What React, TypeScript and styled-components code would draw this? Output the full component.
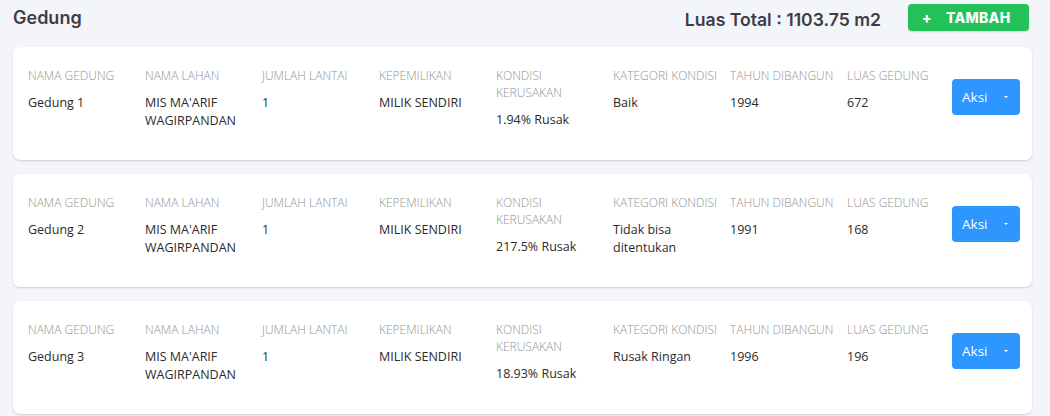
import React from "react";
import styled, { createGlobalStyle } from "styled-components";

const Global = createGlobalStyle`
  html, body { margin: 0; padding: 0; background: #f4f5fa; }
  body { font-family: "Open Sans", "Noto Sans", sans-serif; }
  * { box-sizing: border-box; }
`;

const Page = styled.div`
  width: 1050px;
  height: 416px;
  overflow: hidden;
  padding: 3px 18px 0 13px;
  background: #f4f5fa;
`;

const Header = styled.div`
  display: flex;
  align-items: center;
  height: 28px;
  margin-bottom: 16px;
  padding-right: 3px;
`;

const Title = styled.h1`
  margin: 0;
  flex: 1;
  font-family: "Inter", "Noto Sans", sans-serif;
  font-weight: 600;
  font-size: 18px;
  color: #3d3e45;
`;

const Total = styled.div`
  font-family: "Inter", "Noto Sans", sans-serif;
  font-weight: 600;
  font-size: 17.6px;
  color: #3d3e45;
  margin-right: 27px;
  margin-top: 4px;
`;

const AddButton = styled.button`
  display: flex;
  align-items: center;
  gap: 14px;
  height: 27px;
  width: 121px;
  padding: 0 0 0 14px;
  border: none;
  border-radius: 4px;
  background: #22c15a;
  color: #fff;
  font-family: "Inter", "Noto Sans", sans-serif;
  font-weight: 800;
  font-size: 14px;
  letter-spacing: 0.3px;
  box-shadow: 0 1px 2px rgba(0, 0, 0, 0.12);
`;

const List = styled.div`
  display: flex;
  flex-direction: column;
  gap: 14px;
`;

const Card = styled.div`
  display: flex;
  align-items: center;
  height: 113px;
  padding: 0 12px 10px 15px;
  background: #fff;
  border-radius: 7px;
  box-shadow: 0 1px 2px rgba(0, 0, 0, 0.16);
`;

const Field = styled.div<{ $w: number }>`
  width: ${(p) => p.$w}px;
  flex: none;
  padding-right: 8px;
  align-self: flex-start;
  padding-top: 20px;
`;

const Label = styled.div`
  font-size: 12px;
  font-weight: 300;
  line-height: 17px;
  color: #949494;
  text-transform: uppercase;
  margin-bottom: 10px;
  white-space: normal;
`;

const Value = styled.div`
  font-size: 12.5px;
  line-height: 18px;
  color: #2b2b2b;
  margin-top: 1px;
`;

const Spacer = styled.div`
  flex: 1;
`;

const ActionButton = styled.button`
  flex: none;
  display: flex;
  align-items: center;
  justify-content: space-between;
  width: 68px;
  height: 36px;
  padding: 0 12px 0 10px;
  border: none;
  border-radius: 4px;
  background: #2e96ff;
  color: #fff;
  font-family: "Open Sans", sans-serif;
  font-size: 13.5px;
  margin-top: -4px;
`;

const Caret = styled.span`
  width: 0;
  height: 0;
  border-left: 2px solid transparent;
  border-right: 2px solid transparent;
  border-top: 2px solid #fff;
`;

type Row = {
  nama: string;
  lahan: string;
  lantai: string;
  milik: string;
  rusak: string;
  kategori: string;
  tahun: string;
  luas: string;
};

const rows: Row[] = [
  { nama: "Gedung 1", lahan: "MIS MA'ARIF WAGIRPANDAN", lantai: "1", milik: "MILIK SENDIRI", rusak: "1.94% Rusak", kategori: "Baik", tahun: "1994", luas: "672" },
  { nama: "Gedung 2", lahan: "MIS MA'ARIF WAGIRPANDAN", lantai: "1", milik: "MILIK SENDIRI", rusak: "217.5% Rusak", kategori: "Tidak bisa ditentukan", tahun: "1991", luas: "168" },
  { nama: "Gedung 3", lahan: "MIS MA'ARIF WAGIRPANDAN", lantai: "1", milik: "MILIK SENDIRI", rusak: "18.93% Rusak", kategori: "Rusak Ringan", tahun: "1996", luas: "196" },
];

const columns: { label: string; key: keyof Row; w: number }[] = [
  { label: "Nama Gedung", key: "nama", w: 117 },
  { label: "Nama Lahan", key: "lahan", w: 117 },
  { label: "Jumlah Lantai", key: "lantai", w: 117 },
  { label: "Kepemilikan", key: "milik", w: 117 },
  { label: "Kondisi Kerusakan", key: "rusak", w: 117 },
  { label: "Kategori Kondisi", key: "kategori", w: 117 },
  { label: "Tahun Dibangun", key: "tahun", w: 117 },
  { label: "Luas Gedung", key: "luas", w: 100 },
];

export default function App() {
  return (
    <Page>
      <Global />
      <Header>
        <Title>Gedung</Title>
        <Total>Luas Total : 1103.75 m2</Total>
        <AddButton>
          <span>+</span>
          <span>TAMBAH</span>
        </AddButton>
      </Header>
      <List>
        {rows.map((r) => (
          <Card key={r.nama}>
            {columns.map((c) => (
              <Field key={c.key} $w={c.w}>
                <Label>{c.label}</Label>
                <Value>{r[c.key]}</Value>
              </Field>
            ))}
            <Spacer />
            <ActionButton>
              <span>Aksi</span>
              <Caret />
            </ActionButton>
          </Card>
        ))}
      </List>
    </Page>
  );
}
